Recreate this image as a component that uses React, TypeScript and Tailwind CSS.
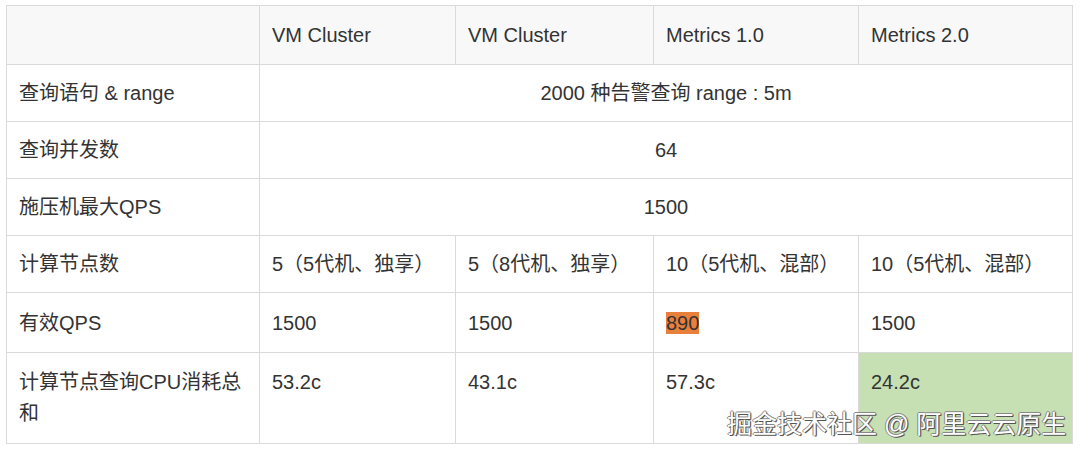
import React from 'react';

const font = { fontFamily: '"Liberation Sans", "Noto Sans CJK SC", sans-serif' };

const rows: { label: string; h: string; cells: React.ReactNode[]; span?: boolean }[] = [
  { label: '查询语句 & range', h: 'h-[57px]', cells: ['2000 种告警查询 range : 5m'], span: true },
  { label: '查询并发数', h: 'h-[57px]', cells: ['64'], span: true },
  { label: '施压机最大QPS', h: 'h-[57px]', cells: ['1500'], span: true },
  {
    label: '计算节点数',
    h: 'h-[57px]',
    cells: ['5（5代机、独享）', '5（8代机、独享）', '10（5代机、混部）', '10（5代机、混部）'],
  },
  {
    label: '有效QPS',
    h: 'h-[60px]',
    cells: ['1500', '1500', <span key="o" className="bg-[#e8803c]">890</span>, '1500'],
  },
];

export default function App() {
  return (
    <div className="relative w-[1080px] h-[453px] bg-white overflow-hidden" style={font}>
      <div className="pt-[5px] pl-[6px]">
        <table className="table-fixed border-collapse text-[20px] leading-[30px] text-[#333]">
          <colgroup>
            <col className="w-[253px]" />
            <col className="w-[196px]" />
            <col className="w-[198px]" />
            <col className="w-[205px]" />
            <col className="w-[214px]" />
          </colgroup>
          <thead>
            <tr className="h-[59px] bg-[#f8f8f8]">
              <th className="border border-[#dadada]" />
              {['VM Cluster', 'VM Cluster', 'Metrics 1.0', 'Metrics 2.0'].map((t, i) => (
                <th key={i} className="border border-[#dadada] px-3 text-left font-normal align-middle">
                  {t}
                </th>
              ))}
            </tr>
          </thead>
          <tbody>
            {rows.map((r) => (
              <tr key={r.label} className={r.h}>
                <td className="border border-[#dadada] px-3 align-middle">{r.label}</td>
                {r.span ? (
                  <td colSpan={4} className="border border-[#dadada] px-3 text-center align-middle">
                    {r.cells[0]}
                  </td>
                ) : (
                  r.cells.map((c, i) => (
                    <td key={i} className="border border-[#dadada] px-3 align-middle">
                      {c}
                    </td>
                  ))
                )}
              </tr>
            ))}
            <tr className="h-[91px]">
              <td className="border border-[#dadada] px-3 pt-[14px] align-top leading-[31px]">
                计算节点查询CPU消耗总和
              </td>
              <td className="border border-[#dadada] px-3 pt-[14px] align-top leading-[31px]">53.2c</td>
              <td className="border border-[#dadada] px-3 pt-[14px] align-top leading-[31px]">43.1c</td>
              <td className="border border-[#dadada] px-3 pt-[14px] align-top leading-[31px]">57.3c</td>
              <td className="border border-[#dadada] bg-[#c6e0b4] px-3 pt-[14px] align-top leading-[31px]">
                24.2c
              </td>
            </tr>
          </tbody>
        </table>
      </div>
      <div className="absolute left-[727px] top-[407px] text-[25px] leading-[34px] text-white whitespace-nowrap [text-shadow:1px_1px_0_#555,-1px_0_0_#888,0_-1px_0_#888,1px_0_1px_#555]">
        掘金技术社区 @ 阿里云云原生
      </div>
    </div>
  );
}
